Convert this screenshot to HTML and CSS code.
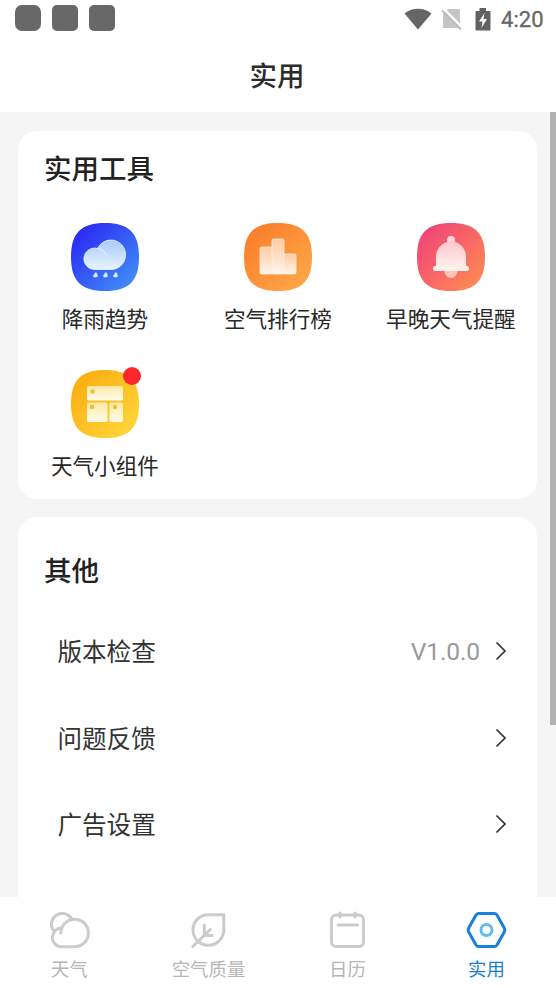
FILE: index.html
```html
<!DOCTYPE html>
<html lang="zh-CN">
<head>
<meta charset="utf-8">
<title>实用</title>
<link rel="stylesheet" href="styles.css">
</head>
<body>
<div class="app">
  <header class="status">
    <div class="notices"><i></i><i></i><i></i></div>
    <div class="system">
      <svg width="28" height="22" viewBox="0 0 28 22"><path d="M.5 5.500C7.500-.8 20.500-.8 27.500 5.500L14 21.500Z" fill="#666"/></svg>
      <svg class="sim" width="21" height="22" viewBox="0 0 21 22"><path d="M7 1H17Q19 1 19 3V20H2V6Z" fill="#c5c5c5"/><path d="M2 0L21 19.500" stroke="#fff" stroke-width="2.500"/><path d="M1 2.500L20 21.500" stroke="#bbb" stroke-width="1.800"/></svg>
      <svg class="battery" width="16" height="23" viewBox="0 0 16 23"><path d="M4.500 0H11V3H14.500Q15.500 3 15.500 4V21.500Q15.500 22.500 14.500 22.500H1.500Q.5 22.500 .5 21.500V4Q.5 3 1.500 3H4.500Z" fill="#626262"/><path d="M9.500 5L4 13.500H7.500L6.500 20L12 11H8.500Z" fill="#fff"/></svg>
      <span class="clock">4:20</span>
    </div>
  </header>
  <h1 class="title">实用</h1>
  <main class="content">
    <section class="card tools">
      <h2>实用工具</h2>
      <div class="grid">
        <div class="tool">
          <svg class="tile" viewBox="0 0 68 68">
            <defs><linearGradient id="blue" x1="0" y1="0" x2="1" y2="1"><stop stop-color="#281bf2"/><stop offset="1" stop-color="#439af9"/></linearGradient><linearGradient id="cloud" x1="0" y1="0" x2="0" y2="1"><stop stop-color="#a9cafb"/><stop offset="1" stop-color="#e7f3ff"/></linearGradient></defs>
            <path fill="url(#blue)" d="M34 0C58 0 68 10 68 34S58 68 34 68S0 58 0 34S10 0 34 0Z"/>
            <path fill="url(#cloud)" stroke="#eef5ff" stroke-width=".8" d="M24 46.500A10.700 10.700 0 1 1 26.500 25.500A14.800 14.800 0 1 1 42 46.500Z"/>
            <path d="M26.500 25.500Q33 26.500 35.500 32.500" fill="none" stroke="#f5f9ff" stroke-width="1"/>
            <path fill="#d8e8ff" d="M25 49Q29 54 24.500 54.500Q19.500 54 25 49ZM35 49Q39 54 34.500 54.500Q29.500 54 35 49ZM45 49Q49 54 44.500 54.500Q39.500 54 45 49Z"/>
          </svg>
          <span>降雨趋势</span>
        </div>
        <div class="tool">
          <svg class="tile" viewBox="0 0 68 68">
            <defs><linearGradient id="orange" x1="0" y1="0" x2="1" y2="1"><stop stop-color="#fa7827"/><stop offset="1" stop-color="#ffac4b"/></linearGradient><linearGradient id="bar" x1="0" y1="0" x2="0" y2="1"><stop stop-color="#ffcba3"/><stop offset="1" stop-color="#fff5eb"/></linearGradient></defs>
            <path fill="url(#orange)" d="M34 0C58 0 68 10 68 34S58 68 34 68S0 58 0 34S10 0 34 0Z"/>
            <g fill="url(#bar)" stroke="#fff0e2" stroke-width=".8"><rect x="16" y="24" width="13" height="27" rx="1.500"/><rect x="39" y="31" width="13" height="20" rx="1.500"/><rect x="28" y="16" width="12" height="35" rx="1.500"/></g>
          </svg>
          <span>空气排行榜</span>
        </div>
        <div class="tool">
          <svg class="tile" viewBox="0 0 68 68">
            <defs><linearGradient id="pink" x1="0" y1="0" x2="1" y2="1"><stop stop-color="#ef3c7c"/><stop offset="1" stop-color="#ff914f"/></linearGradient><linearGradient id="bell" x1="0" y1="0" x2="0" y2="1"><stop stop-color="#ffc8cb"/><stop offset="1" stop-color="#fff4ef"/></linearGradient></defs>
            <path fill="url(#pink)" d="M34 0C58 0 68 10 68 34S58 68 34 68S0 58 0 34S10 0 34 0Z"/>
            <path d="M27 46H41Q40 55 34 55T27 46Z" fill="#ffc4b5"/><circle cx="34" cy="17" r="4" fill="#ffd5d7"/>
            <path fill="url(#bell)" d="M19 43V33.500A15 15 0 0 1 49 33.500V43H50Q52 43 52 45.500T50 48H18Q16 48 16 45.500T18 43Z"/>
          </svg>
          <span>早晚天气提醒</span>
        </div>
        <div class="tool">
          <div class="badged">
          <svg class="tile" viewBox="0 0 68 68">
            <defs><linearGradient id="yellow" x1="0" y1="0" x2="1" y2="1"><stop stop-color="#fba90c"/><stop offset="1" stop-color="#ffda3e"/></linearGradient><linearGradient id="panel" x1="0" y1="0" x2="0" y2="1"><stop stop-color="#ffeaa6"/><stop offset="1" stop-color="#fffbea"/></linearGradient></defs>
            <path fill="url(#yellow)" d="M34 0C58 0 68 10 68 34S58 68 34 68S0 58 0 34S10 0 34 0Z"/>
            <g fill="url(#panel)"><rect x="16" y="16" width="36" height="14.500" rx="1.800"/><rect x="16" y="32.500" width="20.500" height="19.500" rx="1.800"/><rect x="38.500" y="32.500" width="13.500" height="19.500" rx="1.800"/></g>
            <g fill="#eebd31"><circle cx="21.500" cy="21.500" r="2.200"/><circle cx="21" cy="37" r="2.200"/><circle cx="44" cy="37" r="2.200"/></g>
          </svg>
          <b class="dot"></b>
          </div>
          <span>天气小组件</span>
        </div>
      </div>
    </section>
    <section class="card other">
      <h2>其他</h2>
      <div class="row"><span>版本检查</span><em>V1.0.0</em><svg class="chevron" viewBox="0 0 12 20"><path d="M1.500 1.500L10 10L1.500 18.500"/></svg></div>
      <div class="row"><span>问题反馈</span><svg class="chevron" viewBox="0 0 12 20"><path d="M1.500 1.500L10 10L1.500 18.500"/></svg></div>
      <div class="row"><span>广告设置</span><svg class="chevron" viewBox="0 0 12 20"><path d="M1.500 1.500L10 10L1.500 18.500"/></svg></div>
    </section>
    <div class="scrollbar"></div>
  </main>
  <nav class="nav">
    <div class="tab">
      <svg viewBox="0.700 0 42 40"><path d="M12.500 18A9.500 9.500 0 0 0 12 36.800H26A13.800 13.800 0 1 0 12.500 23M4.500 19.500A10.700 10.700 0 0 1 23.500 9"/></svg>
      <span>天气</span>
    </div>
    <div class="tab">
      <svg viewBox="0.700 0 42 40"><path d="M36.500 4.700V20A15.500 15.500 0 0 1 21 35.300A15.300 15.300 0 0 1 21 4.700ZM5.500 36.500L23 19.500M17 15V25.500H25"/></svg>
      <span>空气质量</span>
    </div>
    <div class="tab">
      <svg viewBox="0.500 0 42 40"><rect x="5" y="5" width="32" height="31.500" rx="4.500"/><path d="M13.500 3V7M28.500 3V7M11.500 15H31"/></svg>
      <span>日历</span>
    </div>
    <div class="tab active">
      <svg viewBox="0.500 0 42 40"><path d="M13.500 3.500H28.500Q30.500 3.500 31.500 5L38.500 17.500Q40 20 38.500 22.500L31.500 35Q30.500 36.500 28.500 36.500H13.500Q11.500 36.500 10.500 35L3.500 22.500Q2 20 3.500 17.500L10.500 5Q11.500 3.500 13.500 3.500Z"/><circle cx="21" cy="20" r="5.500" stroke="#62bce8"/></svg>
      <span>实用</span>
    </div>
  </nav>
</div>
</body>
</html>
```
FILE: styles.css
```css
* { box-sizing: border-box; }
body { margin: 0; background: #fff; color: #292929; font-family: Roboto, "Noto Sans CJK SC", sans-serif; }
.app { width: 556px; height: 990px; display: flex; flex-direction: column; overflow: hidden; }
svg { display: block; flex: none; }
.status { height: 40px; flex: none; display: flex; justify-content: space-between; padding: 5px 12.500px 0 15px; }
.notices { display: flex; gap: 11px; }
.notices i { width: 26px; height: 26px; border-radius: 5px; background: #686868; }
.notices i:first-child { border-radius: 7px; }
.system { display: flex; align-items: center; height: 28px; }
.sim { margin-left: 9px; }
.battery { margin-left: 13px; }
.clock { margin-left: 10px; font-size: 22px; line-height: 28px; padding-top: 2px; -webkit-text-stroke: .3px #666; color: #666; }
.title { height: 72px; flex: none; margin: 0; padding-right: 2px; line-height: 73px; text-align: center; font-size: 27.500px; font-weight: 500; color: #2c2c2c; }
.content { position: relative; height: 785px; flex: none; overflow: hidden; background: #f5f5f5; padding: 18.500px 18.600px 0 18.400px; }
.card { background: #fff; border-radius: 19px; }
.card h2 { margin: 0; padding-left: 25.500px; font-size: 27.500px; line-height: 40px; font-weight: 500; color: #222; }
.tools { height: 368px; padding-top: 19px; }
.grid { display: grid; grid-template-columns: repeat(3, 1fr); grid-auto-rows: 147px; padding-top: 33.900px; }
.tool { display: flex; flex-direction: column; align-items: center; font-size: 21.600px; line-height: 32px; white-space: nowrap; }
.tool > span { margin-top: 12.200px; }
.tile { width: 68px; height: 68px; }
.badged { position: relative; }
.dot { position: absolute; right: -2px; top: -3px; width: 18px; height: 18px; border-radius: 50%; background: #fb252c; }
.other { height: 420px; margin-top: 18.500px; padding-top: 35px; }
.other h2 { margin-bottom: 15.500px; }
.row { height: 86.700px; display: flex; align-items: center; padding: 0 30px 0 39px; font-size: 24.600px; color: #333; }
.row span { flex: 1; padding-bottom: 2px; }
.row em { font-style: normal; color: #999; margin-right: 15.500px; padding-top: 1px; letter-spacing: -.15px; }
.chevron { width: 12px; height: 20px; fill: none; stroke: #333; stroke-width: 1.700; }
.scrollbar { position: absolute; right: 0; top: 0; width: 6px; height: 613px; background: #b1b1b1; }
.nav { height: 93px; flex: none; display: grid; grid-template-columns: repeat(4, 1fr); background: #fff; }
.tab { display: flex; flex-direction: column; align-items: center; padding-top: 13px; color: #b6b6b6; font-size: 18.400px; line-height: 28px; }
.tab svg { width: 42px; height: 40px; fill: none; stroke: #cbcbcb; stroke-width: 3; stroke-linecap: round; stroke-linejoin: round; }
.tab span { margin-top: 6px; }
.tab.active { color: #187fcf; }
.tab.active svg { stroke: #187fdb; }
```
